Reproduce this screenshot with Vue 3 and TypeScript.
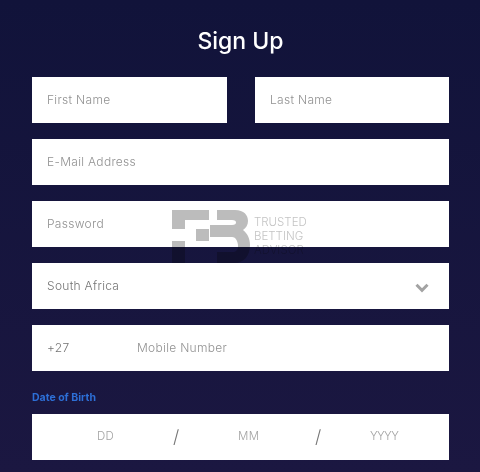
<script setup lang="ts">
const plain = ['E-Mail Address', 'Password']
</script>

<template>
  <main class="page">
    <h1 class="title">Sign Up</h1>
    <form class="form">
      <div class="row two">
        <div class="field"><span>First Name</span></div>
        <div class="field"><span>Last Name</span></div>
      </div>
      <div v-for="label in plain" :key="label" class="field"><span>{{ label }}</span></div>
      <div class="field select">
        <span class="value">South Africa</span>
        <svg class="chevron" width="14" height="10" viewBox="0 0 14 10"><path d="M1.5 1.8 7 7.3l5.500-5.500" fill="none" stroke="#a3a3a3" stroke-width="3" /></svg>
      </div>
      <div class="field phone"><span class="value code">+27</span><span>Mobile Number</span></div>
      <div class="dob">
        <label class="dob-label">Date of Birth</label>
        <div class="field date">
          <span class="dd">DD</span><i>/</i><span class="mm">MM</span><i>/</i><span class="yy">YYYY</span>
        </div>
      </div>
    </form>
    <div class="mark">
      <svg width="80" height="54" viewBox="0 0 80 54" fill="#bcbcbc">
        <path d="M0 1H37V11H13V20H0Z" />
        <path d="M0 32H13V54H0Z" />
        <path d="M24 20H37V32H24Z" />
        <path d="M45 1H63C72 1 76 6 76 12C76 16 74 19 71 21C75 24 78 29 78 36C78 47 72 54 62 54H45V43H60C64 43 66 41 66 37C66 33 64 28 60 28H38V16H60C63 16 64 15 64 13.500C64 12 63 11 60 11H45Z" />
      </svg>
      <div class="mark-text"><span>TRUSTED</span><span>BETTING</span><span>ADVISOR</span></div>
    </div>
  </main>
</template>

<style scoped>
.page {
  position: relative;
  box-sizing: border-box;
  width: 480px;
  height: 472px;
  overflow: hidden;
  padding: 26px 31px 0 32px;
  background: linear-gradient(#11133a, #1b1741);
  font-family: Inter, "Noto Sans", sans-serif;
}
.title {
  margin: 0 0 21px;
  height: 30px;
  color: #fff;
  font-size: 23px;
  line-height: 30px;
  font-weight: 500;
  text-align: center;
}
.form { display: flex; flex-direction: column; gap: 16px; }
.row.two { display: grid; grid-template-columns: 195px 194px; justify-content: space-between; }
.field {
  box-sizing: border-box;
  display: flex;
  align-items: center;
  height: 46px;
  padding: 0 15px 2px;
  background: #fff;
  color: #919191;
  font-size: 12px;
  font-weight: 300;
  letter-spacing: 0.3px;
}
.value { color: #747474; }
.select { justify-content: space-between; }
.chevron { margin-right: 5px; margin-top: 5px; }
.code { width: 90px; }
.dob { margin-top: 2px; }
.dob-label {
  display: block;
  height: 17px;
  margin-bottom: 8px;
  color: #2d6fd6;
  font-size: 10.500px;
  line-height: 17px;
  font-weight: 700;
}
.date { position: relative; padding: 0 0 2px; font-size: 11.500px; color: #a3a3a3; }
.date span, .date i { position: absolute; }
.dd { left: 65px; }
.mm { left: 206px; }
.yy { left: 338px; letter-spacing: -0.6px; }
.date i { font-style: normal; font-size: 18px; color: #777; left: 141px; }
.date i:nth-of-type(2) { left: 283px; }
.mark {
  position: absolute;
  left: 172px;
  top: 209px;
  display: flex;
  gap: 2px;
  mix-blend-mode: multiply;
  pointer-events: none;
}
.mark-text {
  display: flex;
  flex-direction: column;
  color: #c4c4c4;
  font-size: 11.500px;
  line-height: 14px;
  font-weight: 300;
  padding-top: 6px;
}
</style>
